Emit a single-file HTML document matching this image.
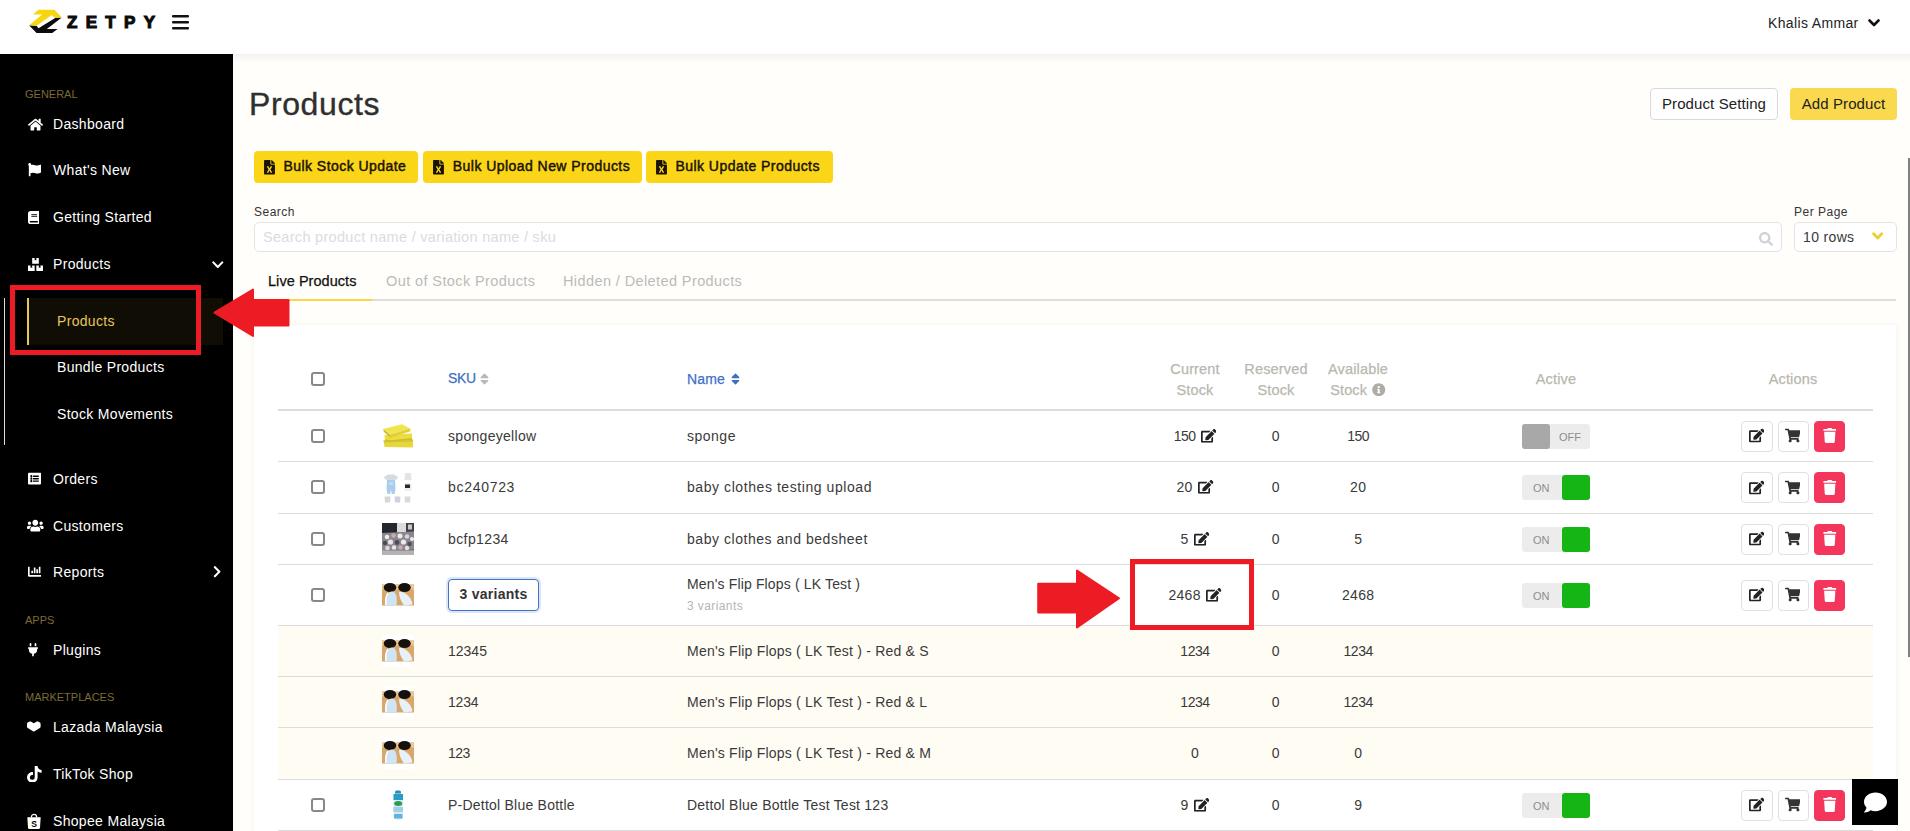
<!DOCTYPE html>
<html lang="en">
<head>
<meta charset="utf-8">
<title>Products - Zetpy</title>
<style>
*{box-sizing:border-box;margin:0;padding:0}
html,body{width:1910px;height:831px;overflow:hidden}
body{font-family:"Liberation Sans",sans-serif;background:#fffefa;color:#333;position:relative;font-size:15px}
.abs{position:absolute}
/* header */
#hdr{position:absolute;left:0;top:0;width:1910px;height:54px;background:#fff;z-index:5}
#hdrshadow{position:absolute;left:233px;top:54px;width:1677px;height:8px;background:linear-gradient(#f3f2ee,#fffefa);z-index:1}
#brand{position:absolute;left:67px;top:14px;font-weight:bold;font-size:17px;letter-spacing:8.3px;color:#0b0b0b;line-height:18px;-webkit-text-stroke:1.1px #0b0b0b}
#user{position:absolute;left:1768px;top:14px;font-size:14px;color:#222;line-height:18px;letter-spacing:.35px}
/* sidebar */
#side{position:absolute;left:0;top:54px;width:233px;height:777px;background:#000;z-index:4}
.sec{position:absolute;left:25px;font-size:11px;color:#7d6b33;letter-spacing:0;line-height:12px}
.mi{position:absolute;left:53px;font-size:14px;color:#fff;line-height:18px;letter-spacing:.32px;white-space:nowrap}
.smi{position:absolute;left:57px;font-size:14px;color:#fff;line-height:18px;letter-spacing:.32px;white-space:nowrap}
.ico{position:absolute;fill:#fff}
/* main */
h1{position:absolute;left:249px;top:84px;font-size:32px;font-weight:normal;-webkit-text-stroke:.35px #2f2f2f;color:#2f2f2f;line-height:40px;letter-spacing:.6px}
.btn{position:absolute;height:32px;border-radius:4px;font-size:15px;line-height:30px;text-align:center;white-space:nowrap;letter-spacing:.1px}
.by{background:#fbd618;color:#1a1207;font-weight:normal;-webkit-text-stroke:.45px #1a1207;font-size:14px;letter-spacing:.45px;line-height:30px;text-align:left;padding-left:29.5px;height:31.5px}
.by svg{position:absolute;left:10px;top:9px;width:11px;height:14.5px}
.lbl{position:absolute;font-size:12px;color:#333;letter-spacing:.5px;line-height:14px}
.tab{position:absolute;top:272px;font-size:14.5px;line-height:18px;color:#bbb;letter-spacing:.4px;white-space:nowrap}
#card{position:absolute;left:254px;top:325px;width:1642px;height:520px;background:#fff;box-shadow:0 0 5px rgba(90,80,50,.09)}
.th{position:absolute;-webkit-text-stroke:.25px #b9b7af;font-size:14.5px;color:#b9b7af;line-height:21px;text-align:center;letter-spacing:.15px;white-space:nowrap}
.thb{color:#3f6fc4;text-align:left;font-size:14px;-webkit-text-stroke:.25px #3f6fc4}
.row{position:absolute;left:278px;width:1595px;border-top:1px solid #dcdcdc}
.row.v{background:#fffcf4}
.c{position:absolute;font-size:14px;color:#3a3a3a;line-height:18px;white-space:nowrap;letter-spacing:.3px}
.n{position:absolute;font-size:14px;color:#3a3a3a;line-height:18px;white-space:nowrap;letter-spacing:.3px;text-align:center;width:60px}
.cb{position:absolute;left:33px;width:14px;height:14px;border:2px solid #88888c;border-radius:3px;background:#fff}
.img{position:absolute;left:104px;width:32px;height:32px;overflow:hidden}
.tg{position:absolute;left:1244px;width:68px;height:25px;background:#ececec;border-radius:3px;font-size:11px;color:#8c8c8c;line-height:26px}
.tg i{position:absolute;top:0;width:28px;height:25px;border-radius:3px;display:block}
.tg.on i{right:0;background:#14b514}
.tg.off i{left:0;background:#a8a8a8}
.tg span{position:absolute;top:0}
.tg.on span{left:11px}
.tg.off span{left:37px}
.ab{position:absolute;width:32px;height:31px;border:1px solid #e0e0e0;border-radius:4px;background:#fff}
.ab.del{background:#f5365c;border-color:#f5365c}
.ab svg{position:absolute;left:6.6px;top:6.6px;width:15.5px;height:15px}

.vb{position:absolute;left:170px;width:91px;height:32px;border:1.5px solid #3d73c9;border-radius:4px;background:#fff;font-size:14px;font-weight:bold;color:#333;text-align:center;line-height:29px;letter-spacing:.25px;box-shadow:0 0 0 2px rgba(61,115,201,.18)}
.c.sm{font-size:12px;color:#b5b5b5;letter-spacing:.4px}
.n.g{display:flex;justify-content:center;align-items:center}
.ei{width:15.5px;height:13.8px;margin-left:5.4px;flex:none}
.srt{position:absolute;width:9px;height:14px}
</style>
</head>
<body>
<div id="hdr">
  <svg class="abs" style="left:29px;top:9px" width="34" height="26" viewBox="0 0 34 26">
    <polygon points="9.300,.800 25.300,.800 32.700,8.200 26.200,8.900 22.700,5.900 7.600,16.700 .200,16.200 13.200,5.600 4.100,5.400" fill="#f7d50f"/>
    <polygon points=".200,16.600 7.800,17 9.500,19.300 26.200,9 32.500,8.700 17.800,20.100 28.600,20.100 23.200,24 7.600,24" fill="#0b0b0b"/>
  </svg>
  <div id="brand">ZETPY</div>
  <svg class="abs" style="left:172px;top:15px" width="17" height="15" viewBox="0 0 17 15"><rect y="0" width="17" height="2.6" rx="1" fill="#111"/><rect y="6" width="17" height="2.6" rx="1" fill="#111"/><rect y="12" width="17" height="2.6" rx="1" fill="#111"/></svg>
  <div id="user">Khalis Ammar</div>
  <svg class="abs" style="left:1867.500px;top:18.800px" width="12" height="9" viewBox="0 0 12 9"><path d="M1.5 1.5 L6 6 L10.5 1.5" fill="none" stroke="#111" stroke-width="2.6" stroke-linecap="round" stroke-linejoin="round"/></svg>
</div>
<div id="hdrshadow"></div>

<div id="side">
  <svg class="abs" style="left:27.5px;top:63.6px" width="15.0" height="13.3" viewBox="0 0 576 512"><path fill="#fff" d="M280.370 148.260L96 300.110V464a16 16 0 0 0 16 16l112.060-.290a16 16 0 0 0 15.920-16V368a16 16 0 0 1 16-16h64a16 16 0 0 1 16 16v95.640a16 16 0 0 0 16 16.050L464 480a16 16 0 0 0 16-16V300L295.670 148.260a12.190 12.190 0 0 0-15.300 0zM571.600 251.470L488 182.560V44.050a12 12 0 0 0-12-12h-56a12 12 0 0 0-12 12v72.610L318.470 43a48 48 0 0 0-61 0L4.340 251.470a12 12 0 0 0-1.600 16.900l25.500 31A12 12 0 0 0 45.150 301l235.220-193.740a12.190 12.190 0 0 1 15.300 0L530.900 301a12 12 0 0 0 16.900-1.600l25.500-31a12 12 0 0 0-1.700-16.930z"/></svg>
<svg class="abs" style="left:27.5px;top:109.3px" width="13.3" height="13.3" viewBox="0 0 512 512"><path fill="#fff" d="M349.565 98.783C295.978 98.783 251.721 64 184.348 64c-24.955 0-47.309 4.384-68.045 12.013a55.947 55.947 0 0 0 3.586-23.562C118.117 24.015 94.806 1.206 66.338.048 34.345-1.254 8 24.296 8 56c0 19.026 9.497 35.825 24 45.945V488c0 13.255 10.745 24 24 24h16c13.255 0 24-10.745 24-24v-94.400c28.311-12.064 63.582-22.122 114.435-22.122 53.588 0 97.844 34.783 165.217 34.783 48.169 0 86.667-16.294 122.505-40.858C506.840 359.452 512 349.571 512 339.045v-243.100c0-23.393-24.269-38.870-45.485-29.016-34.338 15.948-76.454 31.854-116.950 31.854z"/></svg>
<svg class="abs" style="left:27.5px;top:156.7px" width="11.6" height="13.3" viewBox="0 0 448 512"><path fill="#fff" d="M448 360V24c0-13.300-10.700-24-24-24H96C43 0 0 43 0 96v320c0 53 43 96 96 96h328c13.300 0 24-10.700 24-24v-16c0-7.500-3.500-14.300-8.900-18.700-4.200-15.400-4.200-59.300 0-74.700 5.400-4.300 8.900-11.100 8.900-18.600zM128 134c0-3.300 2.700-6 6-6h212c3.300 0 6 2.700 6 6v20c0 3.300-2.700 6-6 6H134c-3.300 0-6-2.700-6-6v-20zm0 64c0-3.300 2.700-6 6-6h212c3.300 0 6 2.700 6 6v20c0 3.300-2.700 6-6 6H134c-3.300 0-6-2.700-6-6v-20zm253.400 250H96c-17.700 0-32-14.300-32-32 0-17.600 14.400-32 32-32h285.400c-1.900 17.100-1.900 46.900 0 64z"/></svg>
<svg class="abs" style="left:27.5px;top:203.5px" width="15.0" height="13.3" viewBox="0 0 576 512"><path fill="#fff" d="M560 288h-80v96l-32-21.300-32 21.300v-96h-80c-8.800 0-16 7.200-16 16v192c0 8.800 7.200 16 16 16h224c8.800 0 16-7.200 16-16V304c0-8.800-7.200-16-16-16zm-384-64h224c8.800 0 16-7.200 16-16V16c0-8.800-7.200-16-16-16h-80v96l-32-21.300L256 96V0h-80c-8.800 0-16 7.200-16 16v192c0 8.800 7.200 16 16 16zm64 64h-80v96l-32-21.300L96 384v-96H16c-8.800 0-16 7.200-16 16v192c0 8.800 7.200 16 16 16h224c8.800 0 16-7.200 16-16V304c0-8.800-7.200-16-16-16z"/></svg>
<svg class="abs" style="left:212px;top:203.8px" width="11.6" height="13.3" viewBox="0 0 448 512"><path fill="#fff" d="M207.029 381.476L12.686 187.132c-9.373-9.373-9.373-24.569 0-33.941l22.667-22.667c9.357-9.357 24.522-9.375 33.901-.040L224 284.505l154.745-154.021c9.379-9.335 24.544-9.317 33.901.040l22.667 22.667c9.373 9.373 9.373 24.569 0 33.941L240.971 381.476c-9.373 9.372-24.569 9.372-33.942 0z"/></svg>
<svg class="abs" style="left:27.5px;top:418.4px" width="13.3" height="13.3" viewBox="0 0 512 512"><path fill="#fff" d="M464 480H48c-26.510 0-48-21.490-48-48V80c0-26.510 21.490-48 48-48h416c26.510 0 48 21.490 48 48v352c0 26.510-21.490 48-48 48zM128 120c-22.091 0-40 17.909-40 40s17.909 40 40 40 40-17.909 40-40-17.909-40-40-40zm0 96c-22.091 0-40 17.909-40 40s17.909 40 40 40 40-17.909 40-40-17.909-40-40-40zm0 96c-22.091 0-40 17.909-40 40s17.909 40 40 40 40-17.909 40-40-17.909-40-40-40zm288-136v-32c0-6.627-5.373-12-12-12H204c-6.627 0-12 5.373-12 12v32c0 6.627 5.373 12 12 12h200c6.627 0 12-5.373 12-12zm0 96v-32c0-6.627-5.373-12-12-12H204c-6.627 0-12 5.373-12 12v32c0 6.627 5.373 12 12 12h200c6.627 0 12-5.373 12-12zm0 96v-32c0-6.627-5.373-12-12-12H204c-6.627 0-12 5.373-12 12v32c0 6.627 5.373 12 12 12h200c6.627 0 12-5.373 12-12z"/></svg>
<svg class="abs" style="left:27px;top:465.4px" width="16.6" height="13.3" viewBox="0 0 640 512"><path fill="#fff" d="M96 224c35.300 0 64-28.700 64-64s-28.700-64-64-64-64 28.700-64 64 28.700 64 64 64zm448 0c35.300 0 64-28.700 64-64s-28.700-64-64-64-64 28.700-64 64 28.700 64 64 64zm32 32h-64c-17.600 0-33.500 7.100-45.100 18.600 40.300 22.100 68.900 62 75.100 109.400h66c17.700 0 32-14.300 32-32v-32c0-35.300-28.700-64-64-64zm-256 0c61.900 0 112-50.100 112-112S381.900 32 320 32 208 82.100 208 144s50.100 112 112 112zm76.800 32h-8.300c-20.800 10-43.900 16-68.500 16s-47.600-6-68.500-16h-8.300C179.600 288 128 339.600 128 403.200V432c0 26.500 21.500 48 48 48h288c26.500 0 48-21.500 48-48v-28.800c0-63.600-51.600-115.200-115.200-115.200zm-223.700-13.400C161.500 263.100 145.600 256 128 256H64c-35.300 0-64 28.700-64 64v32c0 17.700 14.300 32 32 32h65.900c6.300-47.400 34.900-87.300 75.200-109.400z"/></svg>
<svg class="abs" style="left:27.5px;top:511.4px" width="13.3" height="13.3" viewBox="0 0 512 512"><path fill="#fff" d="M332.800 320h38.400c6.400 0 12.800-6.400 12.800-12.800V172.800c0-6.400-6.400-12.800-12.800-12.800h-38.400c-6.400 0-12.800 6.400-12.800 12.800v134.400c0 6.400 6.400 12.800 12.800 12.800zm96 0h38.400c6.400 0 12.800-6.400 12.800-12.800V76.800c0-6.400-6.400-12.800-12.800-12.800h-38.400c-6.400 0-12.800 6.400-12.800 12.800v230.400c0 6.400 6.400 12.800 12.800 12.800zm-288 0h38.400c6.400 0 12.800-6.400 12.800-12.800v-70.400c0-6.400-6.400-12.800-12.800-12.800h-38.400c-6.400 0-12.800 6.400-12.800 12.800v70.400c0 6.400 6.400 12.800 12.800 12.800zm96 0h38.400c6.400 0 12.800-6.400 12.800-12.800V108.800c0-6.400-6.400-12.800-12.800-12.800h-38.400c-6.400 0-12.800 6.400-12.800 12.800v198.400c0 6.400 6.400 12.800 12.800 12.800zM496 384H64V80c0-8.840-7.160-16-16-16H16C7.160 64 0 71.160 0 80v336c0 17.670 14.330 32 32 32h464c8.840 0 16-7.160 16-16v-32c0-8.840-7.160-16-16-16z"/></svg>
<svg class="abs" style="left:213px;top:511.4px" width="8.3" height="13.3" viewBox="0 0 320 512"><path fill="#fff" d="M285.476 272.971L91.132 467.314c-9.373 9.373-24.569 9.373-33.941 0l-22.667-22.667c-9.357-9.357-9.375-24.522-.040-33.901L188.505 256 34.484 101.255c-9.335-9.379-9.317-24.544.040-33.901l22.667-22.667c9.373-9.373 24.569-9.373 33.941 0L285.475 239.030c9.373 9.372 9.373 24.568.001 33.941z"/></svg>
<svg class="abs" style="left:28px;top:589.4px" width="10.0" height="13.3" viewBox="0 0 384 512"><path fill="#fff" d="M320 32a32 32 0 0 0-64 0v96h64zm48 128H16a16 16 0 0 0-16 16v32a16 16 0 0 0 16 16h16v32a160.070 160.070 0 0 0 128 156.800V512h64v-99.200A160.070 160.070 0 0 0 352 256v-32h16a16 16 0 0 0 16-16v-32a16 16 0 0 0-16-16zM128 32a32 32 0 0 0-64 0v96h64z"/></svg>
<svg class="abs" style="left:27px;top:711.500px" width="14.600" height="16.700" viewBox="0 0 448 512"><path fill="#fff" d="M448,209.910a210.060,210.060,0,0,1-122.770-39.250V349.380A162.550,162.550,0,1,1,185,188.310V278.200a74.620,74.620,0,1,0,52.230,71.180V0l88,0a121.180,121.180,0,0,0,1.860,22.170h0A122.180,122.180,0,0,0,381,102.390a121.430,121.430,0,0,0,67,20.140Z"/></svg>
<svg class="abs" style="left:27px;top:667px" width="13.600" height="10.800" preserveAspectRatio="none" viewBox="0 0 14 12"><path fill="#fff" d="M7 2.600 L4.300 .700 Q3.300 .100 2.300 .700 L.700 1.800 Q0 2.300 0 3.200 L0 6.500 Q0 7.400 .800 7.900 L6.200 11.500 Q7 12 7.800 11.500 L13.200 7.900 Q14 7.400 14 6.500 L14 3.200 Q14 2.300 13.300 1.800 L11.700 .700 Q10.700 .100 9.700 .700 Z"/></svg>
<svg class="abs" style="left:27px;top:759px" width="14" height="16" viewBox="0 0 14 16"><path fill="none" stroke="#fff" stroke-width="1.300" d="M4.300 4.500 C4.300 .400 9.700 .400 9.700 4.500"/><path fill="#fff" d="M.300 4.300 L13.700 4.300 L13 14.800 Q12.900 16 11.700 16 L2.300 16 Q1.100 16 1 14.800 Z"/><text x="7" y="13.600" font-family="Liberation Sans, sans-serif" font-weight="bold" font-size="8.500" text-anchor="middle" fill="#000">S</text></svg>
  <div class="sec" style="top:34px">GENERAL</div>
  <div class="mi" style="top:61px">Dashboard</div>
  <div class="mi" style="top:107px">What's New</div>
  <div class="mi" style="top:154px">Getting Started</div>
  <div class="mi" style="top:201px">Products</div>
  <div class="abs" style="left:4px;top:244px;width:1px;height:147px;background:#ddd"></div>
  <div class="abs" style="left:27px;top:244px;width:196px;height:47px;background:#100d05;border-left:2px solid #e8c55a"></div>
  <div class="smi" style="top:258px;color:#e8c55a">Products</div>
  <div class="smi" style="top:304px">Bundle Products</div>
  <div class="smi" style="top:351px">Stock Movements</div>
  <div class="mi" style="top:416px">Orders</div>
  <div class="mi" style="top:463px">Customers</div>
  <div class="mi" style="top:509px">Reports</div>
  <div class="sec" style="top:560px">APPS</div>
  <div class="mi" style="top:587px">Plugins</div>
  <div class="sec" style="top:637px">MARKETPLACES</div>
  <div class="mi" style="top:664px">Lazada Malaysia</div>
  <div class="mi" style="top:711px">TikTok Shop</div>
  <div class="mi" style="top:758px">Shopee Malaysia</div>
</div>

<h1>Products</h1>
<div class="btn" style="left:1650px;top:88px;width:128px;border:1px solid #d9d9d9;background:#fff;color:#222">Product Setting</div>
<div class="btn" style="left:1790px;top:88px;width:107px;background:#fbd94e;color:#222;line-height:32px">Add Product</div>

<div class="btn by" style="left:254px;top:151px;width:164px"><svg viewBox="0 0 384 512"><path fill="#1a1207" d="M224 136V0H24C10.700 0 0 10.700 0 24v464c0 13.300 10.700 24 24 24h336c13.300 0 24-10.700 24-24V160H248c-13.200 0-24-10.800-24-24zm60.100 106.500L224 336l60.100 93.500c5.100 8-.600 18.500-10.100 18.500h-34.900c-4.400 0-8.500-2.400-10.600-6.300C208.900 405.500 192 373 192 373c-6.400 14.800-10 20-36.600 68.800-2.100 3.900-6.100 6.300-10.500 6.300H110c-9.500 0-15.200-10.500-10.100-18.500l60.300-93.500-60.300-93.500c-5.200-8 .600-18.500 10.100-18.500h34.800c4.400 0 8.500 2.400 10.600 6.300 26.100 48.800 20 33.600 36.600 68.500 0 0 6.100-11.700 36.600-68.500 2.100-3.900 6.200-6.300 10.600-6.300H274c9.500-.100 15.200 10.400 10.100 18.400zM384 121.900v6.100H256V0h6.100c6.400 0 12.500 2.500 17 7l97.900 98c4.500 4.500 7 10.600 7 16.900z"/></svg>Bulk Stock Update</div>
<div class="btn by" style="left:423.3px;top:151px;width:218.500px"><svg viewBox="0 0 384 512"><path fill="#1a1207" d="M224 136V0H24C10.700 0 0 10.700 0 24v464c0 13.300 10.700 24 24 24h336c13.300 0 24-10.700 24-24V160H248c-13.200 0-24-10.800-24-24zm60.100 106.500L224 336l60.100 93.500c5.100 8-.600 18.500-10.100 18.500h-34.900c-4.400 0-8.500-2.400-10.600-6.300C208.900 405.500 192 373 192 373c-6.400 14.800-10 20-36.600 68.800-2.100 3.900-6.100 6.300-10.500 6.300H110c-9.500 0-15.200-10.500-10.100-18.500l60.300-93.500-60.300-93.500c-5.200-8 .600-18.500 10.100-18.500h34.800c4.400 0 8.500 2.400 10.600 6.300 26.100 48.800 20 33.600 36.600 68.500 0 0 6.100-11.700 36.600-68.500 2.100-3.900 6.200-6.300 10.600-6.300H274c9.500-.100 15.200 10.400 10.100 18.400zM384 121.900v6.100H256V0h6.100c6.400 0 12.500 2.500 17 7l97.900 98c4.500 4.500 7 10.600 7 16.900z"/></svg>Bulk Upload New Products</div>
<div class="btn by" style="left:646px;top:151px;width:186.700px"><svg viewBox="0 0 384 512"><path fill="#1a1207" d="M224 136V0H24C10.700 0 0 10.700 0 24v464c0 13.300 10.700 24 24 24h336c13.300 0 24-10.700 24-24V160H248c-13.200 0-24-10.800-24-24zm60.100 106.500L224 336l60.100 93.500c5.100 8-.600 18.500-10.100 18.500h-34.900c-4.400 0-8.500-2.400-10.600-6.300C208.900 405.500 192 373 192 373c-6.400 14.800-10 20-36.600 68.800-2.100 3.900-6.100 6.300-10.500 6.300H110c-9.500 0-15.200-10.500-10.100-18.500l60.300-93.500-60.300-93.500c-5.200-8 .600-18.500 10.100-18.500h34.800c4.400 0 8.500 2.400 10.600 6.300 26.100 48.800 20 33.600 36.600 68.500 0 0 6.100-11.700 36.600-68.500 2.100-3.900 6.200-6.300 10.600-6.300H274c9.500-.100 15.200 10.400 10.100 18.400zM384 121.900v6.100H256V0h6.100c6.400 0 12.500 2.500 17 7l97.900 98c4.500 4.500 7 10.600 7 16.900z"/></svg>Bulk Update Products</div>

<div class="lbl" style="left:254px;top:205px">Search</div>
<div class="abs" style="left:254px;top:221.500px;width:1527.500px;height:30px;border:1px solid #e4e4e4;border-radius:5px;background:#fff;font-size:14.5px;line-height:28px;color:#dcdcdc;padding-left:8px;letter-spacing:.3px">Search product name / variation name / sku</div>
<div class="lbl" style="left:1794px;top:205px">Per Page</div>
<div class="abs" style="left:1794px;top:221.500px;width:102.500px;height:30px;border:1px solid #e4e4e4;border-radius:5px;background:#fff;font-size:14px;line-height:28px;color:#3a3a3a;padding-left:8px;letter-spacing:.35px">10 rows</div>
<svg class="abs" style="left:1871.800px;top:232px" width="11.400" height="8" viewBox="0 0 11.400 8"><path d="M1.600 1.700 L5.700 5.900 L9.800 1.700" fill="none" stroke="#ecd02f" stroke-width="2.800" stroke-linecap="round" stroke-linejoin="round"/></svg>
<svg class="abs" style="left:1758.800px;top:231.700px" width="14" height="14" viewBox="0 0 512 512"><path fill="#d2d2d2" d="M505 442.700L405.300 343c-4.500-4.500-10.600-7-17-7H372c27.600-35.300 44-79.700 44-128C416 93.100 322.900 0 208 0S0 93.100 0 208s93.100 208 208 208c48.300 0 92.700-16.400 128-44v16.300c0 6.400 2.500 12.500 7 17l99.700 99.700c9.400 9.400 24.600 9.400 33.900 0l28.300-28.300c9.400-9.400 9.400-24.600.100-34zM208 336c-70.700 0-128-57.200-128-128 0-70.700 57.200-128 128-128 70.700 0 128 57.200 128 128 0 70.700-57.200 128-128 128z"/></svg>

<div class="abs" style="left:254px;top:299px;width:1642px;height:2px;background:#dedede"></div>
<div class="abs" style="left:254px;top:299px;width:118px;height:2px;background:#f5d848"></div>
<div class="tab" style="left:268px;color:#111;letter-spacing:.05px;-webkit-text-stroke:.25px #111">Live Products</div>
<div class="tab" style="left:386px">Out of Stock Products</div>
<div class="tab" style="left:563px">Hidden / Deleted Products</div>

<div id="card"></div>

<div class="abs" style="left:278px;top:409px;width:1595px;height:2px;background:#dcdcdc;z-index:2"></div>
<div class="cb" style="left:311px;top:372px"></div>
<div class="th thb" style="left:448px;top:368px;letter-spacing:-.3px">SKU</div>
<svg class="srt" style="left:479.500px;top:371.500px" viewBox="0 0 320 512"><path fill="#b9b9b9" d="M41 288h238c21.400 0 32.100 25.900 17 41L177 448c-9.400 9.400-24.600 9.400-33.900 0L24 329c-15.100-15.100-4.400-41 17-41zm255-105L177 64c-9.400-9.400-24.600-9.400-33.900 0L24 183c-15.100 15.100-4.400 41 17 41h238c21.400 0 32.100-25.900 17-41z"/></svg>
<div class="th thb" style="left:687px;top:369px">Name</div>
<svg class="srt" style="left:731px;top:372px" viewBox="0 0 320 512"><path fill="#3f6fc4" d="M41 288h238c21.400 0 32.100 25.900 17 41L177 448c-9.400 9.400-24.600 9.400-33.900 0L24 329c-15.100-15.100-4.400-41 17-41zm255-105L177 64c-9.400-9.400-24.600-9.400-33.900 0L24 183c-15.100 15.100-4.400 41 17 41h238c21.400 0 32.100-25.900 17-41z"/></svg>
<div class="th" style="left:1145px;width:100px;top:358.500px">Current<br>Stock</div>
<div class="th" style="left:1226px;width:100px;top:358.500px">Reserved<br>Stock</div>
<div class="th" style="left:1308px;width:100px;top:358.500px">Available<br>Stock <svg style="width:13.500px;height:13.500px;vertical-align:-1.500px;margin-left:1px" viewBox="0 0 512 512"><path fill="#aeaca4" d="M256 8C119.043 8 8 119.083 8 256c0 136.997 111.043 248 248 248s248-111.003 248-248C504 119.083 392.957 8 256 8zm0 110c23.196 0 42 18.804 42 42s-18.804 42-42 42-42-18.804-42-42 18.804-42 42-42zm56 254c0 6.627-5.373 12-12 12h-88c-6.627 0-12-5.373-12-12v-24c0-6.627 5.373-12 12-12h12v-64h-12c-6.627 0-12-5.373-12-12v-24c0-6.627 5.373-12 12-12h64c6.627 0 12 5.373 12 12v100h12c6.627 0 12 5.373 12 12v24z"/></svg></div>
<div class="th" style="left:1506px;width:100px;top:369px">Active</div>
<div class="th" style="left:1743px;width:100px;top:369px">Actions</div>
<!--TABLE-->
<svg width="0" height="0" style="position:absolute"><defs>
<symbol id="i-edit" viewBox="0 0 576 512"><path d="M402.600 83.200l90.200 90.200c3.800 3.800 3.800 10 0 13.800L274.400 405.600l-92.800 10.300c-12.400 1.400-22.900-9.100-21.500-21.500l10.300-92.800L388.800 83.200c3.800-3.800 10-3.800 13.800 0zm162-22.900l-48.800-48.800c-15.200-15.200-39.900-15.200-55.200 0l-35.400 35.400c-3.800 3.800-3.800 10 0 13.800l90.200 90.200c3.800 3.800 10 3.800 13.800 0l35.400-35.400c15.200-15.300 15.200-40 0-55.200zM384 346.200V448H64V128h229.800c3.200 0 6.200-1.300 8.500-3.500l40-40c7.600-7.600 2.200-20.500-8.500-20.500H48C21.500 64 0 85.500 0 112v352c0 26.500 21.500 48 48 48h352c26.500 0 48-21.500 48-48V306.200c0-10.700-12.900-16-20.500-8.500l-40 40c-2.200 2.300-3.500 5.300-3.500 8.500z"/></symbol>
<symbol id="i-cart" viewBox="0 0 576 512"><path d="M528.120 301.319l47.273-208C578.806 78.301 567.391 64 551.990 64H159.208l-9.166-44.810C147.758 8.021 137.930 0 126.529 0H24C10.745 0 0 10.745 0 24v16c0 13.255 10.745 24 24 24h69.883l70.248 343.435C147.325 417.100 136 435.222 136 456c0 30.928 25.072 56 56 56s56-25.072 56-56c0-15.674-6.447-29.835-16.824-40h209.647C430.447 426.165 424 440.326 424 456c0 30.928 25.072 56 56 56s56-25.072 56-56c0-22.172-12.888-41.332-31.579-50.405l5.517-24.276c3.413-15.018-8.002-29.319-23.403-29.319H218.117l-6.545-32h293.145c11.206 0 20.920-7.754 23.403-18.681z"/></symbol>
<symbol id="i-trash" viewBox="0 0 448 512"><path d="M432 32H312l-9.400-18.700A24 24 0 0 0 281.100 0H166.800a23.720 23.720 0 0 0-21.400 13.300L136 32H16A16 16 0 0 0 0 48v32a16 16 0 0 0 16 16h416a16 16 0 0 0 16-16V48a16 16 0 0 0-16-16zM53.200 467a48 48 0 0 0 47.900 45h245.800a48 48 0 0 0 47.900-45L416 128H32z"/></symbol>
</defs></svg>

<div class="row" style="top:410px;height:51px">
<div class="cb" style="top:17.8px"></div>
<svg class="img" style="top:8.8px" viewBox="0 0 32 32"><polygon points="1.500,20.500 31,19.500 31,27.500 2.500,27" fill="#e6d73d"/><polygon points="1.500,20.500 31,19.500 31,21.500 2,22.500" fill="#d3c42f"/><polygon points="2.500,15 30,13.500 30,19.800 9,22 3,21" fill="#ebdc42"/><polygon points="3,19.500 9,20.300 30,18 30,19.800 9,22 3,21" fill="#cdbe2b"/><polygon points="1.200,9 20,4.200 28.200,8.500 8,14.800" fill="#f2e44c"/><polygon points="8,14.800 28.200,8.500 28.500,11.300 8.500,17.800" fill="#dfd037"/><polygon points="1.200,9 8,14.800 8.500,17.800 1.800,11.800" fill="#cbbc2a"/></svg>
<div class="c" style="left:170px;top:15.8px;letter-spacing:0.3px">spongeyellow</div>
<div class="c" style="left:409px;top:15.8px;letter-spacing:0.5px">sponge</div>
<div class="n g" style="left:857px;width:120px;top:15.8px;letter-spacing:-0.5px">150<svg class="ei" viewBox="0 0 576 512" fill="#222"><use href="#i-edit"/></svg></div>
<div class="n" style="left:967.800px;top:15.8px">0</div>
<div class="n" style="left:1050.200px;top:15.8px;letter-spacing:-0.5px">150</div>
<div class="tg off" style="top:12.5px"><i></i><span>OFF</span></div>
<div class="ab" style="left:1463px;top:9.5px"><svg viewBox="0 0 576 512" fill="#222"><use href="#i-edit"/></svg></div><div class="ab" style="left:1500px;top:9.5px;width:31px"><svg style="left:5.500px" viewBox="0 0 576 512" fill="#333"><use href="#i-cart"/></svg></div><div class="ab del" style="left:1536px;top:9.5px;width:31px"><svg viewBox="0 0 448 512" fill="#fff"><use href="#i-trash"/></svg></div>
</div>
<div class="row" style="top:461px;height:52px">
<div class="cb" style="top:18.3px"></div>
<svg class="img" style="top:9.3px" viewBox="0 0 32 32"><rect width="32" height="32" fill="#fff"/><path d="M2 6 L6 3.500 L12 3.500 L16 6 L14.500 9 L13 8 L13 11 L5 11 L5 8 L3.500 9 Z" fill="#d5dae0"/><path d="M5 9 L13 9 L13.500 18 L12.500 23 L9.800 23 L9 19 L8.200 23 L5.500 23 L4.500 18 Z" fill="#aacdee"/><rect x="7" y="11" width="4" height="3" fill="#c3dcf3"/><path d="M23 2 L29 2 L29.500 9 L22.500 9 Z" fill="#e4e4e6"/><path d="M22.500 12 L29.500 12 L29.500 20 L22.500 20 Z" fill="#efefef"/><rect x="23" y="13.500" width="5" height="3.500" fill="#2a2a2a"/><path d="M2.500 25.500 L8.500 25.500 L8 31.500 L3 31.500 Z" fill="#d7d7d9"/><path d="M12.500 25.500 L18.500 25.500 L18 31.500 L13 31.500 Z" fill="#cdd3dc"/><path d="M22.500 25.500 L28.500 25.500 L28 31.500 L23 31.500 Z" fill="#e0d8d6"/></svg>
<div class="c" style="left:170px;top:16.3px;letter-spacing:0.7px">bc240723</div>
<div class="c" style="left:409px;top:16.3px;letter-spacing:0.57px">baby clothes testing upload</div>
<div class="n g" style="left:857px;width:120px;top:16.3px;letter-spacing:0.3px">20<svg class="ei" viewBox="0 0 576 512" fill="#222"><use href="#i-edit"/></svg></div>
<div class="n" style="left:967.800px;top:16.3px">0</div>
<div class="n" style="left:1050.200px;top:16.3px;letter-spacing:0.3px">20</div>
<div class="tg on" style="top:13.0px"><span>ON</span><i></i></div>
<div class="ab" style="left:1463px;top:10.0px"><svg viewBox="0 0 576 512" fill="#222"><use href="#i-edit"/></svg></div><div class="ab" style="left:1500px;top:10.0px;width:31px"><svg style="left:5.500px" viewBox="0 0 576 512" fill="#333"><use href="#i-cart"/></svg></div><div class="ab del" style="left:1536px;top:10.0px;width:31px"><svg viewBox="0 0 448 512" fill="#fff"><use href="#i-trash"/></svg></div>
</div>
<div class="row" style="top:513px;height:51px">
<div class="cb" style="top:17.8px"></div>
<svg class="img" style="top:8.8px" viewBox="0 0 32 32"><rect width="32" height="32" fill="#77757c"/><rect x="0" y="0" width="15" height="10" fill="#25272e"/><rect x="15" y="0" width="9" height="9" fill="#dcdcdc"/><rect x="24" y="0" width="8" height="11" fill="#3f4149"/><rect x="26" y="1.500" width="4" height="5" fill="#c9c9c9"/><polygon points="0,10 32,8.500 32,26 0,28" fill="#8b8790"/><circle cx="5" cy="14" r="2.300" fill="#efecec"/><circle cx="11.500" cy="12.500" r="2.300" fill="#d3a9a4"/><circle cx="18" cy="13" r="2.500" fill="#eeeaea"/><circle cx="25" cy="13.500" r="2.300" fill="#d9d5da"/><circle cx="30" cy="16" r="2" fill="#efecec"/><circle cx="3" cy="20" r="2.200" fill="#4d4a55"/><circle cx="8.500" cy="19" r="2.600" fill="#e9e6e8"/><circle cx="15" cy="19.500" r="2.400" fill="#4f4c57"/><circle cx="21.500" cy="19" r="2.600" fill="#ece9ea"/><circle cx="27.500" cy="21" r="2.300" fill="#524f5a"/><circle cx="5.500" cy="25" r="2.300" fill="#dcd8dc"/><circle cx="12" cy="24.500" r="2.300" fill="#e8e5e6"/><circle cx="18.500" cy="24.500" r="2.200" fill="#cfa9a6"/><circle cx="25" cy="25" r="2.200" fill="#e4e1e3"/><rect x="0" y="27.500" width="32" height="4.500" fill="#b5b2b1"/></svg>
<div class="c" style="left:170px;top:15.8px;letter-spacing:0.4px">bcfp1234</div>
<div class="c" style="left:409px;top:15.8px;letter-spacing:0.54px">baby clothes and bedsheet</div>
<div class="n g" style="left:857px;width:120px;top:15.8px;letter-spacing:0.3px">5<svg class="ei" viewBox="0 0 576 512" fill="#222"><use href="#i-edit"/></svg></div>
<div class="n" style="left:967.800px;top:15.8px">0</div>
<div class="n" style="left:1050.200px;top:15.8px;letter-spacing:0.3px">5</div>
<div class="tg on" style="top:12.5px"><span>ON</span><i></i></div>
<div class="ab" style="left:1463px;top:9.5px"><svg viewBox="0 0 576 512" fill="#222"><use href="#i-edit"/></svg></div><div class="ab" style="left:1500px;top:9.5px;width:31px"><svg style="left:5.500px" viewBox="0 0 576 512" fill="#333"><use href="#i-cart"/></svg></div><div class="ab del" style="left:1536px;top:9.5px;width:31px"><svg viewBox="0 0 448 512" fill="#fff"><use href="#i-trash"/></svg></div>
</div>
<div class="row" style="top:564px;height:61px">
<div class="cb" style="top:22.8px"></div>
<svg class="img" style="top:13.8px" viewBox="0 0 32 32"><rect width="32" height="32" fill="#fff"/><rect x="0" y="5.500" width="32" height="21" fill="#d9a76b"/><rect x="0" y="5.500" width="32" height="5" fill="#e9c896"/><ellipse cx="8" cy="8.500" rx="6.300" ry="4.600" fill="#14110f"/><ellipse cx="22.500" cy="8.500" rx="6.300" ry="4.600" fill="#14110f"/><path d="M3 26.500 C2.500 18 6 12.500 10 12.500 C14 12.500 15.500 18 14.500 26.500 Z" fill="#cfe4f4"/><path d="M17 13 C21 11.500 30 18 30.500 25.500 L22 26.500 C19 22 17 18 17 13 Z" fill="#e6f1f9"/><path d="M6 14 C4 17 3.500 22 4 26" fill="none" stroke="#fff" stroke-width="1.500"/></svg>
<div class="vb" style="top:13.8px">3 variants</div>
<div class="c" style="left:409px;top:9.8px;letter-spacing:0.15px">Men's Flip Flops ( LK Test )</div>
<div class="c sm" style="left:409px;top:32.3px">3 variants</div>
<div class="n g" style="left:857px;width:120px;top:20.8px;letter-spacing:0.3px">2468<svg class="ei" viewBox="0 0 576 512" fill="#222"><use href="#i-edit"/></svg></div>
<div class="n" style="left:967.800px;top:20.8px">0</div>
<div class="n" style="left:1050.200px;top:20.8px;letter-spacing:0.3px">2468</div>
<div class="tg on" style="top:17.5px"><span>ON</span><i></i></div>
<div class="ab" style="left:1463px;top:14.5px"><svg viewBox="0 0 576 512" fill="#222"><use href="#i-edit"/></svg></div><div class="ab" style="left:1500px;top:14.5px;width:31px"><svg style="left:5.500px" viewBox="0 0 576 512" fill="#333"><use href="#i-cart"/></svg></div><div class="ab del" style="left:1536px;top:14.5px;width:31px"><svg viewBox="0 0 448 512" fill="#fff"><use href="#i-trash"/></svg></div>
</div>
<div class="row v" style="top:625px;height:51px">
<svg class="img" style="top:8.8px" viewBox="0 0 32 32"><rect width="32" height="32" fill="#fff"/><rect x="0" y="5.500" width="32" height="21" fill="#d9a76b"/><rect x="0" y="5.500" width="32" height="5" fill="#e9c896"/><ellipse cx="8" cy="8.500" rx="6.300" ry="4.600" fill="#14110f"/><ellipse cx="22.500" cy="8.500" rx="6.300" ry="4.600" fill="#14110f"/><path d="M3 26.500 C2.500 18 6 12.500 10 12.500 C14 12.500 15.500 18 14.500 26.500 Z" fill="#cfe4f4"/><path d="M17 13 C21 11.500 30 18 30.500 25.500 L22 26.500 C19 22 17 18 17 13 Z" fill="#e6f1f9"/><path d="M6 14 C4 17 3.500 22 4 26" fill="none" stroke="#fff" stroke-width="1.500"/></svg>
<div class="c" style="left:170px;top:15.8px;letter-spacing:0px">12345</div>
<div class="c" style="left:409px;top:15.8px;letter-spacing:0.22px">Men's Flip Flops ( LK Test ) - Red &amp; S</div>
<div class="n" style="left:887px;top:15.8px;letter-spacing:-0.45px">1234</div>
<div class="n" style="left:967.800px;top:15.8px">0</div>
<div class="n" style="left:1050.200px;top:15.8px;letter-spacing:-0.45px">1234</div>
</div>
<div class="row v" style="top:676px;height:51px">
<svg class="img" style="top:8.8px" viewBox="0 0 32 32"><rect width="32" height="32" fill="#fff"/><rect x="0" y="5.500" width="32" height="21" fill="#d9a76b"/><rect x="0" y="5.500" width="32" height="5" fill="#e9c896"/><ellipse cx="8" cy="8.500" rx="6.300" ry="4.600" fill="#14110f"/><ellipse cx="22.500" cy="8.500" rx="6.300" ry="4.600" fill="#14110f"/><path d="M3 26.500 C2.500 18 6 12.500 10 12.500 C14 12.500 15.500 18 14.500 26.500 Z" fill="#cfe4f4"/><path d="M17 13 C21 11.500 30 18 30.500 25.500 L22 26.500 C19 22 17 18 17 13 Z" fill="#e6f1f9"/><path d="M6 14 C4 17 3.500 22 4 26" fill="none" stroke="#fff" stroke-width="1.500"/></svg>
<div class="c" style="left:170px;top:15.8px;letter-spacing:-0.2px">1234</div>
<div class="c" style="left:409px;top:15.8px;letter-spacing:0.22px">Men's Flip Flops ( LK Test ) - Red &amp; L</div>
<div class="n" style="left:887px;top:15.8px;letter-spacing:-0.45px">1234</div>
<div class="n" style="left:967.800px;top:15.8px">0</div>
<div class="n" style="left:1050.200px;top:15.8px;letter-spacing:-0.45px">1234</div>
</div>
<div class="row v" style="top:727px;height:52px">
<svg class="img" style="top:9.3px" viewBox="0 0 32 32"><rect width="32" height="32" fill="#fff"/><rect x="0" y="5.500" width="32" height="21" fill="#d9a76b"/><rect x="0" y="5.500" width="32" height="5" fill="#e9c896"/><ellipse cx="8" cy="8.500" rx="6.300" ry="4.600" fill="#14110f"/><ellipse cx="22.500" cy="8.500" rx="6.300" ry="4.600" fill="#14110f"/><path d="M3 26.500 C2.500 18 6 12.500 10 12.500 C14 12.500 15.500 18 14.500 26.500 Z" fill="#cfe4f4"/><path d="M17 13 C21 11.500 30 18 30.500 25.500 L22 26.500 C19 22 17 18 17 13 Z" fill="#e6f1f9"/><path d="M6 14 C4 17 3.500 22 4 26" fill="none" stroke="#fff" stroke-width="1.500"/></svg>
<div class="c" style="left:170px;top:16.3px;letter-spacing:-0.5px">123</div>
<div class="c" style="left:409px;top:16.3px;letter-spacing:0.22px">Men's Flip Flops ( LK Test ) - Red &amp; M</div>
<div class="n" style="left:887px;top:16.3px;letter-spacing:0.3px">0</div>
<div class="n" style="left:967.800px;top:16.3px">0</div>
<div class="n" style="left:1050.200px;top:16.3px;letter-spacing:0.3px">0</div>
</div>
<div class="row" style="top:779px;height:51px">
<div class="cb" style="top:17.8px"></div>
<svg class="img" style="top:8.8px" viewBox="0 0 32 32"><rect width="32" height="32" fill="#fff"/><rect x="13" y="1.500" width="6" height="4" rx="1.500" fill="#2b8fb8"/><rect x="11.500" y="4.500" width="9.500" height="26" rx="2.500" fill="#d7eaf5"/><rect x="11.500" y="5" width="9.500" height="6" fill="#2a9ac7"/><ellipse cx="16.200" cy="14.500" rx="4" ry="2.500" fill="#2f9a4a"/><rect x="11.500" y="18" width="9.500" height="5" fill="#9fd0ea"/><rect x="12" y="25" width="8.500" height="4.500" rx="1" fill="#5fb4dd"/></svg>
<div class="c" style="left:170px;top:15.8px;letter-spacing:0.23px">P-Dettol Blue Bottle</div>
<div class="c" style="left:409px;top:15.8px;letter-spacing:0.23px">Dettol Blue Bottle Test Test 123</div>
<div class="n g" style="left:857px;width:120px;top:15.8px;letter-spacing:0.3px">9<svg class="ei" viewBox="0 0 576 512" fill="#222"><use href="#i-edit"/></svg></div>
<div class="n" style="left:967.800px;top:15.8px">0</div>
<div class="n" style="left:1050.200px;top:15.8px;letter-spacing:0.3px">9</div>
<div class="tg on" style="top:12.5px"><span>ON</span><i></i></div>
<div class="ab" style="left:1463px;top:9.5px"><svg viewBox="0 0 576 512" fill="#222"><use href="#i-edit"/></svg></div><div class="ab" style="left:1500px;top:9.5px;width:31px"><svg style="left:5.500px" viewBox="0 0 576 512" fill="#333"><use href="#i-cart"/></svg></div><div class="ab del" style="left:1536px;top:9.5px;width:31px"><svg viewBox="0 0 448 512" fill="#fff"><use href="#i-trash"/></svg></div>
</div>
<!--/TABLE-->
<div class="abs" style="left:278px;top:830px;width:1595px;height:1px;background:#dcdcdc"></div>


<!-- annotations -->
<div class="abs" style="left:10px;top:285px;width:191px;height:70px;border:5px solid #ed1c24;z-index:9"></div>
<svg class="abs" style="left:212px;top:286px;z-index:9" width="80" height="54" viewBox="0 0 80 54"><path d="M2.500 26.700 L41 3.500 L41 14 L76.500 14 L76.500 39.500 L41 39.500 L41 50 Z" fill="#ed1c24" stroke="#ed1c24" stroke-width="2" stroke-linejoin="round"/></svg>
<div class="abs" style="left:1130px;top:558.500px;width:124px;height:71px;border:5px solid #ed1c24;z-index:9"></div>
<svg class="abs" style="left:1034px;top:566px;z-index:9" width="90" height="66" viewBox="0 0 90 66"><path d="M4.200 17.800 L43 17.800 L43 4.500 L85 32.300 L43 61.500 L43 46.600 L4.200 46.600 Z" fill="#ed1c24" stroke="#ed1c24" stroke-width="2" stroke-linejoin="round"/></svg>
<div class="abs" style="left:1852px;top:779px;width:46px;height:46px;background:#000;z-index:8"><svg class="abs" style="left:12px;top:12px" width="23" height="23" viewBox="0 0 512 512"><path fill="#fff" d="M256 32C114.600 32 0 125.100 0 240c0 49.600 21.400 95 57 130.700C44.500 421.100 2.700 466 2.200 466.500c-2.200 2.300-2.800 5.700-1.500 8.700S4.800 480 8 480c66.300 0 116-31.800 140.600-51.400 32.700 12.300 69 19.400 107.400 19.400 141.400 0 256-93.100 256-208S397.400 32 256 32z"/></svg></div>
<div class="abs" style="left:1908px;top:158px;width:2px;height:499px;background:#808080;z-index:6"></div>
</body>
</html>
